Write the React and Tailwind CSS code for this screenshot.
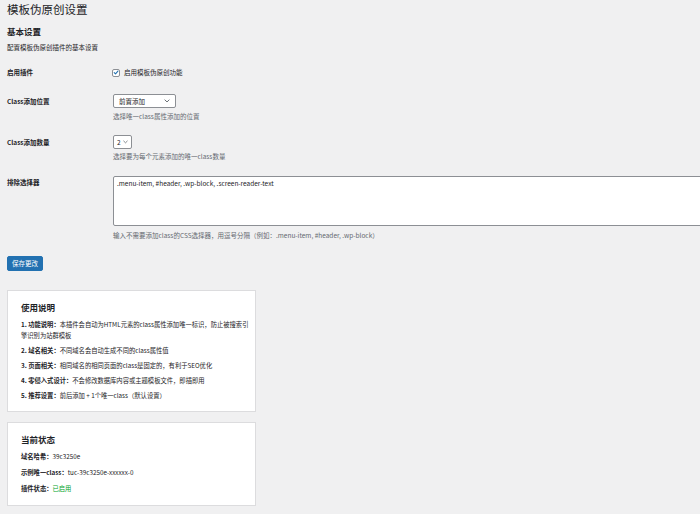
const FONT = { fontFamily: '"Noto Sans CJK SC", "Noto Sans", sans-serif' };

const Chevron = ({ className = "" }) => (
  <svg viewBox="0 0 10 6" className={className} fill="none" stroke="#50575e" strokeWidth="1.4" strokeLinecap="round" strokeLinejoin="round">
    <path d="M1.5 1.2 5 4.6 8.5 1.2" />
  </svg>
);

const Desc = ({ children, className = "" }) => (
  <p className={`text-[6.5px] leading-[9px] text-[#646970] ${className}`}>{children}</p>
);

const Label = ({ children, className = "" }) => (
  <div className={`w-[106px] shrink-0 text-[6.5px] leading-[9px] font-bold text-[#1d2327] ${className}`}>{children}</div>
);

const USAGE = [
  ["1. 功能说明：", ["本插件会自动为HTML元素的class属性添加唯一标识，防止被搜索引", "擎识别为站群模板"]],
  ["2. 域名相关：", ["不同域名会自动生成不同的class属性值"]],
  ["3. 页面相关：", ["相同域名的相同页面的class是固定的，有利于SEO优化"]],
  ["4. 零侵入式设计：", ["不会修改数据库内容或主题模板文件，即插即用"]],
  ["5. 推荐设置：", ["前后添加 + 1个唯一class（默认设置）"]],
];

export default function App() {
  return (
    <div className="w-[700px] h-[514px] overflow-hidden bg-[#f0f0f1] text-[#1d2327]" style={FONT}>
      <div className="pl-[7px] pt-[2px]">
        <h1 className="text-[11.5px] leading-[14px] font-normal">模板伪原创设置</h1>
        <h2 className="mt-[9.5px] text-[8.5px] leading-[11px] font-bold">基本设置</h2>
        <p className="mt-[6px] text-[6.5px] leading-[9px]">配置模板伪原创插件的基本设置</p>

        {/* 启用插件 */}
        <div className="mt-[16.5px] flex items-center">
          <Label>启用插件</Label>
          <div className="flex items-center gap-[4px] -ml-[1px]">
            <span className="w-[8px] h-[8px] rounded-[2px] border border-[#8c8f94] bg-white flex items-center justify-center">
              <svg viewBox="0 0 10 10" className="w-[7px] h-[7px]" fill="none" stroke="#2271b1" strokeWidth="1.8" strokeLinecap="round" strokeLinejoin="round">
                <path d="M2 5.2 4.2 7.4 8.2 2.6" />
              </svg>
            </span>
            <span className="text-[6.5px] leading-[9px]">启用模板伪原创功能</span>
          </div>
        </div>

        {/* Class添加位置 */}
        <div className="mt-[17px] flex">
          <Label className="pt-[3px]">Class添加位置</Label>
          <div>
            <div className="w-[63px] h-[14px] rounded-[2px] border border-[#8c8f94] bg-white flex items-center justify-between pl-[5px] pr-[5px] text-[6.5px] leading-[9px]">
              <span>前置添加</span>
              <Chevron className="w-[6px] h-[4px]" />
            </div>
            <Desc className="mt-[3.5px]">选择唯一class属性添加的位置</Desc>
          </div>
        </div>

        {/* Class添加数量 */}
        <div className="mt-[14.5px] flex">
          <Label className="pt-[3px]">Class添加数量</Label>
          <div>
            <div className="w-[19px] h-[14px] rounded-[2px] border border-[#8c8f94] bg-white flex items-center justify-between pl-[3px] pr-[3px] text-[6.5px] leading-[9px]">
              <span>2</span>
              <Chevron className="w-[5px] h-[4px]" />
            </div>
            <Desc className="mt-[2.5px]">选择要为每个元素添加的唯一class数量</Desc>
          </div>
        </div>

        {/* 排除选择器 */}
        <div className="mt-[15.5px] flex">
          <Label className="pt-[2px]">排除选择器</Label>
          <div>
            <div className="w-[620px] h-[50px] rounded-[2px] border border-[#8c8f94] bg-white px-[3px] py-[2px] text-[6.5px] leading-[9px]">
              .menu-item, #header, .wp-block, .screen-reader-text
            </div>
            <Desc className="mt-[4.5px]">输入不需要添加class的CSS选择器，用逗号分隔（例如：.menu-item, #header, .wp-block）</Desc>
          </div>
        </div>

        <button className="mt-[16.5px] h-[15px] px-[4px] rounded-[2px] bg-[#2271b1] border border-[#2271b1] text-white text-[6.5px] leading-[9px] flex items-center">
          保存更改
        </button>

        {/* 使用说明 */}
        <div className="mt-[19px] w-[249px] bg-white border border-[#dcdcde] px-[13px] pt-[11px] pb-[10px]">
          <h3 className="text-[8.5px] leading-[11px] font-bold">使用说明</h3>
          <div className="mt-[7px] flex flex-col gap-[4.6px]">
            {USAGE.map(([k, lines]) => (
              <p key={k} className="text-[6.3px] leading-[10.5px] whitespace-nowrap">
                <span className="font-bold">{k}</span>
                {lines.map((l, i) => (
                  <span key={i}>
                    {i > 0 && <br />}
                    {l}
                  </span>
                ))}
              </p>
            ))}
          </div>
        </div>

        {/* 当前状态 */}
        <div className="mt-[10px] w-[249px] bg-white border border-[#dcdcde] px-[13px] pt-[11px] pb-[11px]">
          <h3 className="text-[8.5px] leading-[11px] font-bold">当前状态</h3>
          <div className="mt-[6px] flex flex-col gap-[5px] text-[6.3px] leading-[11px]">
            <p><span className="font-bold">域名哈希：</span>39c3250e</p>
            <p><span className="font-bold">示例唯一class：</span>tuc-39c3250e-xxxxxx-0</p>
            <p><span className="font-bold">插件状态：</span><span className="text-[#00a32a]">已启用</span></p>
          </div>
        </div>
      </div>
    </div>
  );
}
